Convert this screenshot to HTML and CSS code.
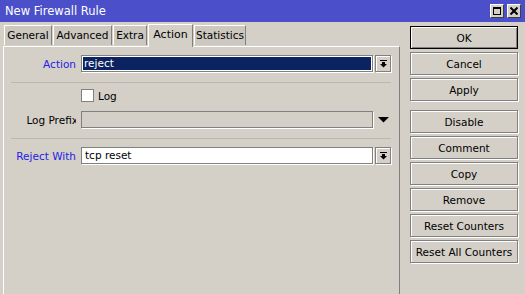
FILE: index.html
```html
<!DOCTYPE html>
<html lang="en">
<head>
    <meta charset="UTF-8">
    <title>New Firewall Rule</title>
    <link rel="stylesheet" href="styles.css">
</head>
<body>
    <div class="window">
        <div class="titlebar">
            <span class="title">New Firewall Rule</span>
            <div class="title-buttons">
                <span class="tb-btn"><span class="max-icon"></span></span>
                <span class="tb-btn">
                    <svg width="8" height="8" viewBox="0 0 8 8"><path d="M0.5 0.5 L7.5 7.5 M7.5 0.5 L0.5 7.5" stroke="#000" stroke-width="2"/></svg>
                </span>
            </div>
        </div>
        <div class="main">
            <div class="left">
                <div class="tabs">
                    <div class="tab" style="width:48px">General</div>
                    <div class="tab" style="width:59px">Advanced</div>
                    <div class="tab" style="width:34px">Extra</div>
                    <div class="tab active" style="width:45px">Action</div>
                    <div class="tab" style="width:52px">Statistics</div>
                </div>
                <div class="panel">
                    <div class="row first">
                        <div class="label blue">Action</div>
                        <div class="field focused">reject</div>
                        <div class="drop-btn">
                            <svg width="9" height="8" viewBox="0 0 9 8"><rect x="1" y="0" width="7" height="1"/><rect x="3" y="2" width="3" height="2"/><polygon points="1,4 8,4 4.5,7.5"/></svg>
                        </div>
                    </div>
                    <div class="sep"></div>
                    <div class="check-row">
                        <span class="checkbox"></span>
                        <span>Log</span>
                    </div>
                    <div class="row spaced">
                        <div class="label"><span class="clip">Log Prefix</span></div>
                        <div class="field disabled"></div>
                        <div class="drop-arrow">
                            <svg width="11" height="6" viewBox="0 0 11 6"><polygon points="0,0 11,0 5.5,5.5"/></svg>
                        </div>
                    </div>
                    <div class="sep"></div>
                    <div class="row last">
                        <div class="label blue">Reject With</div>
                        <div class="field">tcp reset</div>
                        <div class="drop-btn">
                            <svg width="9" height="8" viewBox="0 0 9 8"><rect x="1" y="0" width="7" height="1"/><rect x="3" y="2" width="3" height="2"/><polygon points="1,4 8,4 4.5,7.5"/></svg>
                        </div>
                    </div>
                </div>
            </div>
            <div class="actions">
                <button class="default">OK</button>
                <button>Cancel</button>
                <button>Apply</button>
                <button class="group">Disable</button>
                <button>Comment</button>
                <button>Copy</button>
                <button>Remove</button>
                <button>Reset Counters</button>
                <button>Reset All Counters</button>
            </div>
        </div>
    </div>
</body>
</html>
```

FILE: styles.css
```css
body {
    margin: 0;
    background: #d4d0c8;
    font-family: "DejaVu Sans", sans-serif;
    font-size: 10.5px;
    color: #000;
    overflow: hidden;
}
.window {
    width: 525px;
    height: 294px;
    overflow: hidden;
}
.titlebar {
    height: 22px;
    background: #4b4fc9;
    display: flex;
    align-items: center;
    justify-content: space-between;
    padding: 0 4px 0 5px;
    box-sizing: border-box;
}
.title {
    color: #fff;
    font-size: 11.5px;
}
.title-buttons {
    display: flex;
    gap: 3px;
}
.tb-btn {
    width: 14px;
    height: 14px;
    box-sizing: border-box;
    background: #d4d0c8;
    border: 1px solid;
    border-color: #fff #404040 #404040 #fff;
    display: flex;
    align-items: center;
    justify-content: center;
}
.max-icon {
    width: 8px;
    height: 8px;
    box-sizing: border-box;
    border: 1px solid #000;
    border-top-width: 2px;
}
.main {
    display: flex;
    padding: 2px 0 0 3px;
}
.left {
    width: 397px;
}
.tabs {
    display: flex;
    height: 22px;
    padding-left: 1px;
    align-items: flex-end;
}
.tab {
    height: 20px;
    box-sizing: border-box;
    background: #ccc8c0;
    border: 1px solid;
    border-color: #fff #808080 transparent #fff;
    border-bottom: none;
    text-align: center;
    line-height: 19px;
    margin-bottom: 1px;
    margin-right: 1px;
    white-space: nowrap;
}
.tab.active {
    height: 23px;
    margin-bottom: -1px;
    background: #d4d0c8;
    font-size: 11px;
    line-height: 19px;
    position: relative;
    z-index: 1;
}
.panel {
    height: 260px;
    box-sizing: border-box;
    border: 1px solid;
    border-color: #fff #808080 #808080 #fff;
    padding: 0;
}
.row {
    display: flex;
    align-items: center;
    height: 17px;
}
.row.first {
    margin-top: 8px;
}
.row.spaced {
    margin-top: 9px;
}
.row.last {
    margin-top: 8px;
}
.label {
    width: 72px;
    margin-right: 5px;
    text-align: right;
    white-space: nowrap;
    overflow: hidden;
}
.label .clip {
    display: inline-block;
    margin-right: -2px;
}
.blue {
    color: #2222e6;
}
.field {
    width: 292px;
    height: 17px;
    box-sizing: border-box;
    background: #fff;
    border: 1px solid #808080;
    box-shadow: 1px 1px 0 #fff;
    padding: 0 3px;
    line-height: 15px;
    white-space: nowrap;
}
.field.focused {
    background: #0b2360;
    color: #fff;
    box-shadow: inset 0 0 0 1px #fff, 1px 1px 0 #fff;
    padding-left: 2px;
}
.field.disabled {
    background: #d4d0c8;
}
.drop-btn {
    width: 16px;
    height: 17px;
    box-sizing: border-box;
    margin-left: 2px;
    border: 1px solid #808080;
    box-shadow: inset 1px 1px 0 #fff, 1px 1px 0 #fff;
    display: flex;
    align-items: center;
    justify-content: center;
}
.drop-arrow {
    width: 16px;
    margin-left: 2px;
    display: flex;
    justify-content: center;
}
.sep {
    margin: 10px 0 0 7px;
    width: 380px;
    border-top: 1px solid #bcb8b0;
}
.check-row {
    display: flex;
    align-items: center;
    margin: 6px 0 0 77px;
    height: 13px;
    gap: 4px;
}
.checkbox {
    width: 13px;
    height: 13px;
    box-sizing: border-box;
    background: #fff;
    border: 1px solid #808080;
}
.actions {
    display: flex;
    flex-direction: column;
    gap: 3px;
    width: 108px;
    margin: 2px 0 0 10px;
}
button {
    height: 23px;
    box-sizing: border-box;
    background: #d4d0c8;
    border: 1px solid #808080;
    box-shadow: inset 1px 1px 0 #fff, 1px 1px 0 #fff;
    font-family: "DejaVu Sans", sans-serif;
    font-size: 10.5px;
    color: #000;
    padding: 0;
    white-space: nowrap;
}
button.default {
    border: 1px solid #000;
    box-shadow: inset 1px 1px 0 #fff, inset -1px -1px 0 #808080;
}
button.group {
    margin-top: 6px;
}
```
